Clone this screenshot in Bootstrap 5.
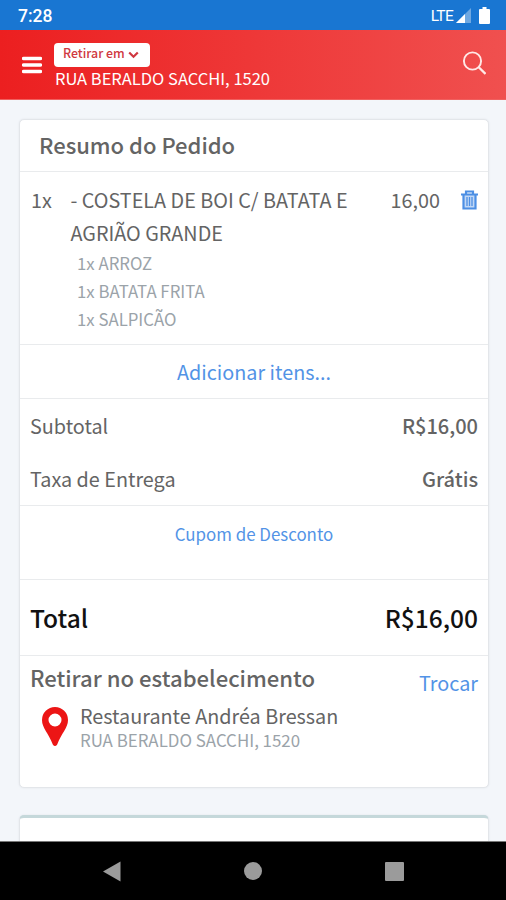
<!DOCTYPE html>
<html lang="pt-BR">
<head>
<meta charset="utf-8">
<meta name="viewport" content="width=device-width, initial-scale=1">
<title>Resumo do Pedido</title>
<link href="https://cdn.jsdelivr.net/npm/bootstrap@5.3.0/dist/css/bootstrap.min.css" rel="stylesheet">
<style>
body{font-family:"Noto Sans CJK JP","Noto Sans CJK SC",sans-serif;background:#f3f6fa;color:#646464;height:900px;overflow:hidden;font-size:19.8px}
svg{display:block;flex:none}
.statusbar{height:30px;background:#1976d2;padding:1px 16px 0 18px;font:500 17.5px/30px Roboto,sans-serif}
.lte{font:400 15.5px/30px Roboto,sans-serif;letter-spacing:-.7px;margin-right:3px}
.appbar{height:70px;background:linear-gradient(90deg,#ec1f20,#f0504f);border-bottom:1px solid #f0605f;padding:13px 20px 0 22px}
.place{margin-left:12px}
.pickup{height:24px;width:96px;border-radius:4px;color:#d03840;font-size:12.4px;line-height:21px;padding-left:9px;font-weight:500}
.street{font-size:16.5px;line-height:23px;padding-left:1px}
.content{height:741px;padding:19px 17px 0 19px;overflow:hidden}
.panel{border:1px solid #e3e6ea;border-radius:5px;box-shadow:0 0 2px #dfe3e8;margin-bottom:27px}
.line{border-bottom:1px solid #e9ebed}
.heading{height:52px;line-height:48px;padding-left:19px;font-size:22px;font-weight:500}
.item{height:173px;padding:11px 10px 0 11px}
.qty{width:39.5px}
.name{line-height:33px;white-space:nowrap}
.extras{color:#9ba3a9;font-size:16.8px;line-height:28px;padding-left:6.500px}
.link{color:#5293e6}
.fees{height:107px;padding:0 10px}
.fees>div{height:53px;line-height:54px}
.amount{font-size:20px;font-weight:500}
.coupon{height:74px;line-height:56px;font-size:16.9px}
.total{height:76px;line-height:75px;padding:0 10px;font-size:24.5px;color:#111;font-weight:500}
.store{height:131px;padding:6px 10px}
.shop{font-size:22.1px;line-height:31px;font-weight:500}
.switch{margin-top:6px}
.shopname{font-size:19.8px;line-height:30px;margin-top:3px}
.addr{font-size:16.9px;line-height:18px;color:#9ba3a9}
.sysbar{height:59px;background:#000;padding:0 102px;border-top:1px solid #777}
.next{border-top:3px solid #c5d8da;height:60px}
</style>
</head>
<body>
<header>
<div class="statusbar d-flex align-items-center text-white">
<span class="me-auto">7:28</span><span class="lte">LTE</span>
<svg width="15" height="15" viewBox="0 0 15 15" class="me-2"><path d="M15 0v15H0z" fill="#6fa8e1"/><path d="M9 6v9H0z" fill="#fff"/></svg>
<svg width="11" height="17" viewBox="0 0 11 17"><path d="M3.500 0h4v2H10a1 1 0 0 1 1 1v13a1 1 0 0 1-1 1H1a1 1 0 0 1-1-1V3a1 1 0 0 1 1-1h2.500z" fill="#fff"/></svg>
</div>
<nav class="appbar d-flex text-white">
<svg width="20" height="18" viewBox="0 0 20 18" style="margin-top:13px"><path d="M1.500 2.500h17M1.500 9h17M1.500 15.500h17" stroke="#fff" stroke-width="3.500" stroke-linecap="round"/></svg>
<div class="place me-auto">
<div class="pickup bg-white d-flex">Retirar em<svg class="mt-2" style="margin-left:3px" width="11" height="8" viewBox="0 0 11 8"><path d="M1.200 1.500l4.300 4.300 4.300-4.300" fill="none" stroke="#d03840" stroke-width="2.200"/></svg></div>
<div class="street">RUA BERALDO SACCHI, 1520</div>
</div>
<svg class="mt-2" width="24" height="25" viewBox="0 0 24 25"><circle cx="10.500" cy="10" r="8.600" fill="none" stroke="#ffe9e7" stroke-width="1.900"/><path d="M16.500 16l7 7" stroke="#ffe9e7" stroke-width="2.300"/></svg>
</nav>
</header>
<main class="content">
<section class="panel bg-white">
<div class="heading line">Resumo do Pedido</div>
<div class="item line d-flex align-items-start">
<div class="qty name">1x</div>
<div class="me-auto"><div class="name">- COSTELA DE BOI C/ BATATA E<br>AGRIÃO GRANDE</div>
<div class="extras">1x ARROZ<br>1x BATATA FRITA<br>1x SALPICÃO</div></div>
<div class="name">16,00</div>
<svg style="margin:7px 0 0 21px" width="17" height="20" viewBox="0 0 17 20"><path d="M5 4V1.500h7V4M0 4.500h17M2.500 4v14.500h12V4" fill="none" stroke="#4d8fe4" stroke-width="2.200"/><path d="M2.500 4h12v15h-12z" fill="#4d8fe4" opacity=".35"/><path d="M6 7v9M8.500 7v9M11 7v9" stroke="#4d8fe4" stroke-width="1.300"/></svg>
</div>
<div class="line text-center link" style="height:54px;line-height:54px">Adicionar itens...</div>
<div class="fees line">
<div class="d-flex justify-content-between"><span>Subtotal</span><span class="amount">R$16,00</span></div>
<div class="d-flex justify-content-between"><span>Taxa de Entrega</span><span class="amount">Grátis</span></div>
</div>
<div class="coupon line text-center link">Cupom de Desconto</div>
<div class="total line d-flex justify-content-between"><span>Total</span><span>R$16,00</span></div>
<div class="store">
<div class="d-flex justify-content-between"><span class="shop">Retirar no estabelecimento</span><span class="link switch">Trocar</span></div>
<div class="d-flex">
<svg style="margin:9px 12px 0 12px" width="26" height="39" viewBox="0 0 26 39"><path fill-rule="evenodd" d="M13 0A13 13 0 0 0 0 13c0 8 6.500 13 10.800 24.500q2.200 3 4.400 0C19.500 26 26 21 26 13A13 13 0 0 0 13 0zM13 6.500a6.500 6.500 0 1 1 0 13a6.500 6.500 0 0 1 0-13z" fill="#ec1515"/></svg>
<div><div class="shopname">Restaurante Andréa Bressan</div><div class="addr">RUA BERALDO SACCHI, 1520</div></div>
</div>
</div>
</section>
<section class="panel next bg-white"></section>
</main>
<footer class="sysbar d-flex justify-content-between align-items-center">
<svg width="19" height="21" viewBox="0 0 19 21"><path d="M18.500.5v20L1 10.500z" fill="#9b9b9b"/></svg>
<svg width="18" height="18" viewBox="0 0 18 18"><circle cx="9" cy="9" r="9" fill="#9b9b9b"/></svg>
<svg width="19" height="19" viewBox="0 0 19 19"><rect width="19" height="19" rx="1" fill="#9b9b9b"/></svg>
</footer>
<script src="https://cdn.jsdelivr.net/npm/bootstrap@5.3.0/dist/js/bootstrap.bundle.min.js"></script>
</body>
</html>
